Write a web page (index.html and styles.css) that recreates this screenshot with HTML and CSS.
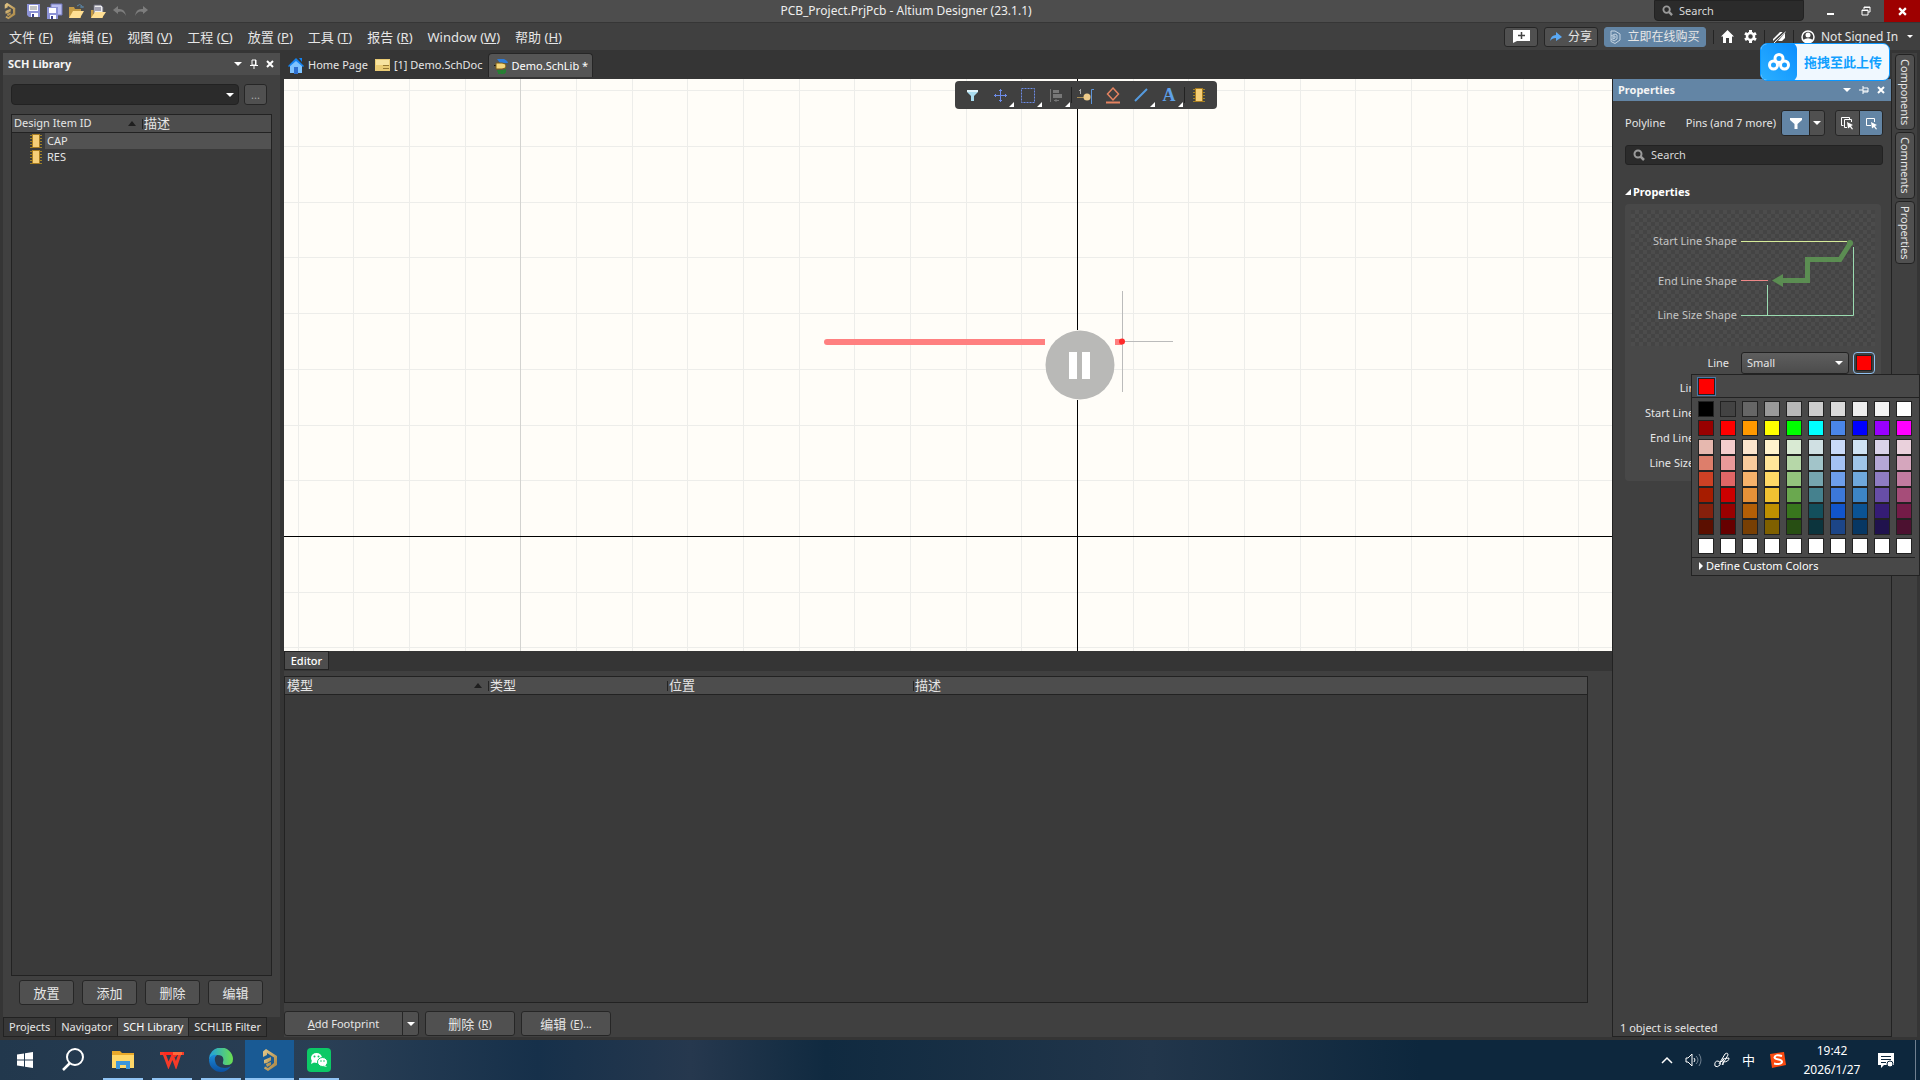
FILE: index.html
```html
<!DOCTYPE html>
<html lang="zh-CN">
<head>
<meta charset="utf-8">
<title>PCB_Project.PrjPcb - Altium Designer (23.1.1)</title>
<link rel="stylesheet" href="styles.css">
<script src="script.js" defer></script>
</head>
<body>
<svg class="defs" aria-hidden="true">
  <defs>
    <linearGradient id="gold" x1="0" y1="0" x2="1" y2="1"><stop offset="0" stop-color="#e6c98a"/><stop offset="1" stop-color="#a5813f"/></linearGradient>
    <linearGradient id="edgeA" x1="0" y1="0" x2="1" y2="0"><stop offset="0" stop-color="#1f9fe0"/><stop offset="1" stop-color="#6be04f"/></linearGradient>
    <linearGradient id="edgeB" x1="0" y1="0" x2="0" y2="1"><stop offset="0" stop-color="#1b8ad8"/><stop offset="1" stop-color="#0c4f9e"/></linearGradient>
    <symbol id="altium" viewBox="0 0 16 24"><path d="M1 9V3.500L4 1l11 7v9L6 23l-4-2.500 1-2 3 1.500 6-5V9.500L5 5v2z" fill="url(#gold)"/><path d="M2 12l7-3v3.500L5 15l-3 .5zM4 16l5-2v3l-4 2z" fill="url(#gold)"/></symbol>
    <symbol id="chip" viewBox="0 0 12 14"><path d="M0 1.500h12M0 4.500h12M0 7.500h12M0 10.500h12M0 13.500h12" stroke="#a08228"/><rect x="2" y="0" width="8" height="14" fill="#a87c20"/><rect x="3" y="1" width="6" height="12" fill="#f6cf78"/></symbol>
    <symbol id="lens" viewBox="0 0 12 12"><circle cx="5" cy="5" r="3.500" fill="none" stroke="#9a9a9a" stroke-width="2"/><path d="M7.500 7.500l3.500 3.500" stroke="#9a9a9a" stroke-width="2.500"/></symbol>
    <symbol id="down" viewBox="0 0 8 6"><path d="M0 1h8L4 5z" fill="#fff"/></symbol>
    <symbol id="cross" viewBox="0 0 8 8"><path d="M1 1l6 6M7 1L1 7" stroke="#fff" stroke-width="2"/></symbol>
  </defs>
</svg>

<header class="titlebar">
  <div class="quick">
    <svg class="logo" width="12" height="18"><use href="#altium"/></svg>
    <svg width="14" height="16" viewBox="1 0 14 16"><path d="M1 1h13v13H3l-2-2z" fill="#8d93d6"/><path d="M3 2h9v6H3z" fill="#fff"/><path d="M4 4h7M4 6h7" stroke="#888"/><path d="M5 10h7v4H5z" fill="#fff"/><path d="M6 11h2v3H6z" fill="#3c4290"/></svg>
    <svg width="17" height="17"><path d="M5 1h11v11H5z" fill="#b9bdf0" stroke="#7278bd"/><path d="M1 4h11v12H1z" fill="#8d93d6"/><path d="M3 5h7v5H3z" fill="#fff"/><path d="M4 12h6v4H4z" fill="#fff"/><path d="M5 13h2v3H5z" fill="#3c4290"/></svg>
    <svg width="17" height="17"><path d="M1 4h5l1 2h6v9H1z" fill="#c59b45"/><path d="M1 15l4-7h11l-4 7z" fill="#ffdf94"/><path d="M9 3q3-3 5 0v2M12 4h4" stroke="#5a86a8" fill="none"/></svg>
    <svg width="17" height="17"><path d="M1 7h12v8H1z" fill="#c59b45"/><path d="M4 2h7l2 2v7H4z" fill="#eee" stroke="#667"/><path d="M5 5h6M5 7h6" stroke="#557"/><path d="M1 15l4-6h11l-4 6z" fill="#ffdf94"/></svg>
    <svg width="16" height="12"><path d="M6 1L1 5l5 4V7q5-2 8 4Q13 3 6 4z" fill="#7d7d7d"/></svg>
    <svg width="16" height="12"><path d="M10 1l5 4-5 4V7Q5 5 2 11 3 3 10 4z" fill="#7d7d7d"/></svg>
  </div>
  <h1 class="title">PCB_Project.PrjPcb - Altium Designer (23.1.1)</h1>
  <label class="title-search"><svg width="11" height="11"><use href="#lens"/></svg><input type="text" placeholder="Search" aria-label="Search"></label>
  <div class="window-buttons">
    <button aria-label="Minimize"><svg width="10" height="10"><path d="M2 8h7" stroke="#fff" stroke-width="2"/></svg></button>
    <button aria-label="Restore"><svg width="10" height="10"><path d="M3 3V1h6v5H7M1 4h6v5H1z" fill="none" stroke="#fff"/><path d="M1 4.500h6M3 1.500h6" stroke="#fff"/></svg></button>
    <button class="close" aria-label="Close"><svg width="9" height="9" viewBox="0 0 8 8"><use href="#cross"/></svg></button>
  </div>
</header>

<nav class="menubar">
  <ul class="menus">
    <li><a href="#">文件 (<u>F</u>)</a></li><li><a href="#">编辑 (<u>E</u>)</a></li><li><a href="#">视图 (<u>V</u>)</a></li><li><a href="#">工程 (<u>C</u>)</a></li><li><a href="#">放置 (<u>P</u>)</a></li><li><a href="#">工具 (<u>T</u>)</a></li><li><a href="#">报告 (<u>R</u>)</a></li><li><a href="#">Window (<u>W</u>)</a></li><li><a href="#">帮助 (<u>H</u>)</a></li>
  </ul>
  <div class="account">
    <button class="btn note" aria-label="Comment"><svg width="17" height="13"><path d="M0 0h17v11H4l-4 2z" fill="#fff"/><path d="M5 5.500h7M8.500 2v7" stroke="#444" stroke-width="1.500"/></svg></button>
    <button class="btn share"><svg width="12" height="10"><path d="M0 9q1-6 6-6V0l6 5-6 4V6Q2 6 0 9z" fill="#5aa9f5"/></svg>分享</button>
    <button class="btn buy"><svg width="11" height="14" fill="none" stroke="#c5d4e2"><path d="M1 1h4l5 3v6l-5 3.500-4-2V9M1 1v5l4-2 2 1v4l-3 2-3-2V6"/><path d="M3 6v3l2-1V6z"/></svg>立即在线购买</button>
    <i class="sep"></i>
    <svg width="13" height="13"><path d="M6.500 0L13 6.500h-2V13H8V8H5v5H2V6.500H0z" fill="#fff"/></svg>
    <svg class="gear-ico" width="13" height="13"><circle cx="6.500" cy="6.500" r="3.500" fill="none" stroke="#fff" stroke-width="2.500"/><path d="M6.500 0v3M6.500 10v3M1 3.200l2.500 1.500M9.500 8.300L12 9.800M1 9.800l2.500-1.500M9.500 4.700L12 3.200" stroke="#fff" stroke-width="3"/></svg>
    <i class="sep"></i>
    <svg width="14" height="13"><path d="M1 9L8 2h3L3 11H1zM6 11l7-8v5l-3 3z" fill="#fff"/><path d="M1 12L13 1" stroke="#404040" stroke-width="1.500"/><path d="M2 13L13.500 2" stroke="#fff"/></svg>
    <i class="sep"></i>
    <svg width="14" height="14"><circle cx="7" cy="7" r="6" fill="none" stroke="#fff" stroke-width="1.500"/><circle cx="7" cy="5" r="2.500" fill="#fff"/><path d="M2 10q5-3.500 10 0-2 3.500-5 3.500T2 10z" fill="#fff"/></svg>
    <a class="signin" href="#">Not Signed In</a>
    <svg width="6" height="5" viewBox="0 0 8 6"><use href="#down"/></svg>
  </div>
</nav>

<div class="upload"><span class="upload-ico"><svg width="22" height="18" fill="none" stroke="#fff" stroke-width="3"><circle cx="11" cy="5.500" r="4"/><circle cx="5.500" cy="12" r="4"/><circle cx="16.500" cy="12" r="4"/></svg></span><span>拖拽至此上传</span></div>

<main class="work">
  <section class="library">
    <div class="lib-body">
      <div class="panel-head"><h2>SCH Library</h2><svg width="8" height="6"><use href="#down"/></svg><svg width="8" height="10"><path d="M2 1h4v5H2zM0 6.500h8M4 6v4" stroke="#fff" fill="none"/><path d="M5 1h1v5H5z" fill="#fff"/></svg><svg width="8" height="8"><use href="#cross"/></svg></div>
      <div class="lib-filter"><label class="combo"><input type="text" aria-label="Library"><svg width="8" height="6"><use href="#down"/></svg></label><button class="btn">...</button></div>
      <div class="lib-list">
        <table>
          <thead><tr><th class="c-id">Design Item ID<svg class="sort" width="8" height="5"><path d="M0 5h8L4 0z" fill="#1f1f1f"/></svg></th><th>描述</th></tr></thead>
          <tbody>
            <tr><td class="item"><svg width="12" height="14"><use href="#chip"/></svg><span>CAP</span></td><td class="picked"></td></tr>
            <tr><td class="item plain"><svg width="12" height="14"><use href="#chip"/></svg><span>RES</span></td><td></td></tr>
          </tbody>
        </table>
      </div>
      <div class="lib-actions"><button class="btn">放置</button><button class="btn">添加</button><button class="btn">删除</button><button class="btn">编辑</button></div>
    </div>
    <div class="lib-tabs"><button>Projects</button><button>Navigator</button><button class="on">SCH Library</button><button>SCHLIB Filter</button></div>
  </section>

  <div class="docs">
    <div class="doc-tabs">
      <a href="#"><svg width="16" height="17"><path d="M2 8l6-6 6 6v8H2z" fill="#7ec3ff"/><path d="M0 9l8-8 8 8-1 1-7-6-7 6z" fill="#1583f0"/><path d="M11 1h3v4z" fill="#1583f0"/><path d="M6 10h4v7H6z" fill="#2e6fd0"/></svg>Home Page</a>
      <a href="#"><svg width="15" height="12"><path d="M0 0h15v12H0z" fill="#e9cb74"/><path d="M1 1h13v5H1z" fill="#f7e3a0"/><path d="M8 6.500h6M8 9.500h6" stroke="#967832"/></svg>[1] Demo.SchDoc</a>
      <a href="#" class="on"><svg width="16" height="16"><path d="M4 1h7q4 2 4 4H7z" fill="#2e7bd8"/><path d="M1 7.500h12" stroke="#111"/><path d="M3 5h6q4 0 4 3t-4 3H3z" fill="#f5d67b" stroke="#7b5d18"/><path d="M4 13h9M5 15h7M6 12v4M9 12v4M12 11v4" stroke="#238431" stroke-width="1.500"/></svg>Demo.SchLib *</a>
    </div>
    <div class="doc-row">
      <div class="center">
        <div class="canvas">
          <svg width="100%" height="100%">
            <g class="grid">
              <path d="M14.500 0v572M69.500 0v572M125.500 0v572M181.500 0v572M292.500 0v572M348.500 0v572M403.500 0v572M459.500 0v572M515.500 0v572M570.500 0v572M626.500 0v572M682.500 0v572M737.500 0v572M849.500 0v572M904.500 0v572M960.500 0v572M1016.500 0v572M1071.500 0v572M1127.500 0v572M1183.500 0v572M1239.500 0v572M1294.500 0v572"/>
              <path d="M0 11.500h1328M0 67.500h1328M0 123.500h1328M0 178.500h1328M0 234.500h1328M0 290.500h1328M0 346.500h1328M0 401.500h1328M0 513.500h1328M0 568.500h1328"/>
              <path class="major" d="M236.500 0v572"/>
            </g>
            <path class="axis" d="M793.500 0v251M793.500 321v251M0 457.500h1328"/>
            <path d="M543 263h218M831 263h7" stroke="#ff8080" stroke-width="6"/><circle cx="543" cy="263" r="3" fill="#ff8080"/>
            <path d="M838.500 212v101M838 262.500h51" stroke="#bbb"/>
            <circle cx="838" cy="262.500" r="3" fill="#ff2a2a"/>
            <circle cx="796" cy="286" r="34.500" fill="#b9b9b7"/>
            <path d="M785 273h8v27h-8zM798 273h8v27h-8z" fill="#fff"/>
          </svg>
          <div class="active-bar">
            <button aria-label="Filter"><svg width="16" height="18"><path d="M3 4h11v2l-4 4v5H7v-5L3 6z" fill="#a9dcef"/><path d="M3 4h11v2H3z" fill="#e0f4fb"/></svg></button>
            <button class="more" aria-label="Move"><svg width="16" height="18"><path d="M8.500 3v13M2 9.500h13M7 4.500h3M7 14.500h3M3.500 8v3M13.500 8v3" stroke="#6d8ce8"/></svg></button>
            <button class="more" aria-label="Select"><svg width="16" height="18"><path d="M1.500 2.500h13v14h-13z" fill="none" stroke="#6d8ce8" stroke-dasharray="2 1"/></svg></button>
            <button class="more" aria-label="Align"><svg width="16" height="18"><path d="M2.500 3v13" stroke="#777"/><path d="M5 4h6v3H5zM5 8h9v4H5z" fill="#777"/><path d="M6 14.500h5M8 13v3" stroke="#777"/></svg></button>
            <button class="split" aria-label="Pin"><svg width="18" height="18"><path d="M0 10.500h9" stroke="#a88c52"/><circle cx="10" cy="10" r="3.500" fill="#edca8a"/><path d="M17 2.500h-2.500V17" stroke="#5e94d8" fill="none"/><path d="M3.500 2v5M2 3.500h2" stroke="#aaa"/></svg></button>
            <button aria-label="Port"><svg width="16" height="18"><path d="M8 2l5.500 6L8 14 2.500 8z" fill="none" stroke="#e58360" stroke-width="1.500"/><path d="M1 16.500h14" stroke="#e58360" stroke-width="2"/></svg></button>
            <button class="more" aria-label="Line"><svg width="16" height="18"><path d="M2 15L14 3" stroke="#559be0" stroke-width="2"/></svg></button>
            <button class="more letter" aria-label="Text">A</button>
            <button class="split" aria-label="Part"><svg width="12" height="14"><use href="#chip"/></svg></button>
          </div>
        </div>
        <section class="editor">
          <div class="editor-tabs"><button>Editor</button></div>
          <div class="editor-body">
            <div class="models"><table><thead><tr><th class="m1">模型<svg class="sort" width="8" height="5"><path d="M0 5h8L4 0z" fill="#1f1f1f"/></svg></th><th class="m2">类型</th><th class="m3">位置</th><th>描述</th></tr></thead></table></div>
            <div class="model-actions">
              <div class="split-btn"><button class="btn"><u>A</u>dd Footprint</button><button class="btn arrow" aria-label="More"><svg width="8" height="6"><use href="#down"/></svg></button></div>
              <button class="btn wide">删除 <small>(<u>R</u>)</small></button><button class="btn wide">编辑 <small>(<u>E</u>)...</small></button>
            </div>
          </div>
        </section>
      </div>

      <aside class="props">
        <div class="props-head"><h2>Properties</h2><svg width="8" height="6"><use href="#down"/></svg><svg width="10" height="8"><path d="M0 4h4M4 0v8M4 2h5v4H4" stroke="#fff" fill="none"/><path d="M4 5h5" stroke="#fff"/></svg><svg width="8" height="8"><use href="#cross"/></svg></div>
        <div class="props-body">
          <div class="kind"><span>Polyline</span><span class="pins">Pins (and 7 more)</span>
            <div class="pair p1"><button class="btn on" aria-label="Filter"><svg width="12" height="12"><path d="M0 1h12v2L7.500 7v5h-3V7L0 3z" fill="#fff"/></svg></button><button class="btn arrow" aria-label="Filter options"><svg width="8" height="6"><use href="#down"/></svg></button></div>
            <div class="pair p2"><button class="btn" aria-label="Select multiple"><svg width="13" height="13" fill="none" stroke="#fff"><path d="M2.500 8.500h-2v-8h8v2M6 10.500H3.500v-8h7V5"/><path d="M6 5l6 3-2 1 2 3-1 .5L9 10l-2 1.500z" fill="#fff" stroke="none"/></svg></button><button class="btn on" aria-label="Select one"><svg width="13" height="13" fill="none" stroke="#fff"><path d="M6 8.500H1.500v-7h8V5"/><path d="M6 5l6 3-2 1 2 3-1 .5L9 10l-2 1.500z" fill="#fff" stroke="none"/></svg></button></div>
          </div>
          <label class="prop-search"><svg width="12" height="12"><use href="#lens"/></svg><input type="text" placeholder="Search" aria-label="Search properties"></label>
          <h3><svg width="6" height="6"><path d="M6 0v6H0z" fill="#fff"/></svg>Properties</h3>
          <div class="group">
            <div class="diagram">
              <ul><li>Start Line Shape</li><li>End Line Shape</li><li>Line Size Shape</li></ul>
              <svg width="134" height="136" fill="none"><path d="M0 31.500h106" stroke="#d6ec9a"/><path d="M0 70.500h27" stroke="#e88"/><path d="M26.500 75v30M0 105.500h112.500V37" stroke="#9adbb0"/><path d="M110 32L99 49.500H66.500v21H40" stroke="#5b8d52" stroke-width="5"/><circle cx="109" cy="33" r="3" fill="#5b8d52"/><path d="M31 70.500L42 64v13z" fill="#5b8d52"/></svg>
            </div>
            <div class="row"><label for="line">Line</label><select id="line" class="size"><option>Small</option></select><svg class="size-arrow" width="8" height="6"><use href="#down"/></svg>
              <div class="picker"><button class="swatch-btn" aria-label="Line colour"><i></i></button>
                <div class="palette">
                  <div class="palette-top"><button class="chosen" aria-label="Current colour"></button></div>
                  <div id="swatches"></div>
                  <button class="custom"><svg width="5" height="8"><path d="M1 0l4 4-4 4z" fill="#fff"/></svg>Define Custom Colors</button>
                </div>
              </div>
            </div>
            <div class="row"><span>Line Style</span></div><div class="row"><span>Start Line Shape</span></div><div class="row"><span>End Line Shape</span></div><div class="row"><span>Line Size Shape</span></div>
          </div>
          <p class="status">1 object is selected</p>
        </div>
      </aside>
    </div>
  </div>
  <nav class="dock"><button>Components</button><button>Comments</button><button>Properties</button></nav>
</main>

<footer class="taskbar">
  <button aria-label="Start"><svg width="16" height="16"><path d="M0 2.500l7-1v6H0zM8 1.300L16 0v7.500H8zM0 8.500h7v6l-7-1zM8 8.500h8V16l-8-1.300z" fill="#fff"/></svg></button>
  <button aria-label="Search"><svg width="24" height="24"><circle cx="13" cy="9" r="8" fill="none" stroke="#fff" stroke-width="2"/><path d="M8 15l-7 7" stroke="#fff" stroke-width="2.500"/></svg></button>
  <button class="run" aria-label="Explorer"><svg width="22" height="20"><path d="M0 1h8l2 2h12v15H0z" fill="#e9a92a"/><path d="M0 5h22v13H0z" fill="#ffd768"/><path d="M4 11h14v8h-4v-4H8v4H4z" fill="#3b96dc"/></svg></button>
  <button class="run" aria-label="WPS"><svg width="24" height="18" fill="none" stroke="#f53a28" stroke-width="3"><path d="M0 2.500h4l4.500 12 4-9.500 3.500 9.500 4-12h4"/><path d="M4 2.500h9l3 3" stroke="#ff2a20"/><path d="M13 2.500h9" stroke="#ff6a3a"/></svg></button>
  <button class="run" aria-label="Edge"><svg width="24" height="24"><path d="M0 12a12 12 0 0 1 24-1q0 6-6 6-5 0-4-3 2-7-6-7-6 0-8 5z" fill="url(#edgeA)"/><path d="M0 12q2-6 8-5-3 2-2 6 1 7 10 7 3 0 6-2-4 6-10 6A12 12 0 0 1 0 12z" fill="url(#edgeB)"/></svg></button>
  <button class="run active" aria-label="Altium Designer"><svg width="16" height="24"><use href="#altium"/></svg></button>
  <button class="run" aria-label="WeChat"><svg width="24" height="24"><rect width="24" height="24" rx="4" fill="#0cc966"/><ellipse cx="9.500" cy="10" rx="5.500" ry="5" fill="#fff"/><path d="M5 12l-1 4 4-2z" fill="#fff"/><ellipse cx="15.500" cy="14" rx="5" ry="4.500" fill="#fff" stroke="#0cc966"/><path d="M18 17l2 2-4-1z" fill="#fff"/><g fill="#0cc966"><circle cx="7.500" cy="8.500" r="1"/><circle cx="11.500" cy="8.500" r="1"/><circle cx="14" cy="13" r=".8"/><circle cx="17" cy="13" r=".8"/></g></svg></button>
  <div class="tray">
    <svg width="12" height="8"><path d="M1 7l5-5 5 5" fill="none" stroke="#fff" stroke-width="1.500"/></svg>
    <svg width="17" height="14" fill="none" stroke="#fff"><path d="M1 5h2l4-4v12L3 9H1z"/><path d="M9 5q2 2 0 4"/><path d="M11 3q4 4 0 8M14 1q4 6 0 12" stroke="#6f8090"/></svg>
    <svg width="16" height="16" fill="none" stroke="#fff"><path d="M1 14q-1-5 3-5 4 1 2 4-3 3-5 1zM5 12l6-10q3-2 3 1L8 13M7 10q3-5 8-4 0 4-6 4M9 6v7"/></svg>
    <span class="ime">中</span>
    <svg width="16" height="16"><path d="M0 2l14-2 2 13-14 3z" fill="#fb4a0f"/><path d="M12 4Q5 2 4.500 5.500 5 7 8.500 7.500T12 10q-1 3-8 1.500" stroke="#fff" stroke-width="2" fill="none"/></svg>
    <time>19:42<br>2026/1/27</time>
    <svg width="17" height="17"><path d="M0 1h16v12H6l-3 3v-3H0z" fill="#fff"/><path d="M3 4.500h10M3 7.500h10M3 10.500h5" stroke="#0d273d"/><circle cx="12" cy="12" r="3" fill="#fff" stroke="#0d273d"/></svg>
    <i class="desk"></i>
  </div>
</footer>
</body>
</html>
```
FILE: styles.css
```css
* { box-sizing: border-box; }
body { margin: 0; height: 100vh; display: flex; flex-direction: column; overflow: hidden; background: #353535; color: #e6e6e6; font: 11px/16px "Noto Sans", "Noto Sans CJK SC", sans-serif; }
h1, h2, h3, p, ul { margin: 0; padding: 0; font-size: inherit; font-weight: 400; list-style: none; }
a { color: inherit; text-decoration: none; }
button, input, select { font: inherit; color: inherit; margin: 0; padding: 0; border: 0; background: none; }
input { width: 100%; min-width: 0; outline: 0; }
input::placeholder { color: #d8d8d8; opacity: 1; }
svg { flex: none; display: block; }
.defs { position: absolute; width: 0; height: 0; }
.btn { display: flex; align-items: center; justify-content: center; background: #505050; border: 1px solid #262626; border-radius: 3px; white-space: nowrap; }
.btn.on { background: #6385a5; }

.titlebar { flex: none; height: 23px; display: grid; grid-template-columns: 1fr 150px 116px; align-items: start; background: #4d4d4d; border-bottom: 1px solid #363636; }
.quick { grid-column: 1; grid-row: 1; display: flex; align-items: center; gap: 5px; height: 22px; padding-left: 4px; }
.quick .logo { margin-right: 6px; }
.title { grid-column: 1 / -1; grid-row: 1; padding-right: 108px; text-align: center; font-size: 12px; line-height: 22px; color: #eee; }
.title-search { grid-column: 2; grid-row: 1; height: 21px; display: flex; align-items: center; gap: 6px; padding-left: 7px; background: #2b2b2b; border: 1px solid #222; border-radius: 0 0 4px 4px; }
.window-buttons { grid-column: 3; grid-row: 1; display: flex; justify-content: flex-end; height: 22px; }
.window-buttons button { width: 36px; display: grid; place-items: center; }
.window-buttons .close { background: #9e0000; }

.menubar { flex: none; height: 27px; display: flex; align-items: center; justify-content: space-between; background: #404040; padding: 0 7px 0 9px; }
.menus { display: flex; gap: 15px; font-size: 13px; white-space: nowrap; }
.account { display: flex; align-items: center; gap: 6px; font-size: 12px; }
.account .btn { height: 20px; gap: 6px; }
.note { width: 34px; }
.share { width: 54px; }
.account .buy { width: 102px; background: #6385a5; border-color: #6385a5; }
.sep { width: 1px; height: 14px; margin: 0 1px; background: #242424; }
.gear-ico { margin-left: 4px; }
.signin { width: 80px; white-space: nowrap; }

.upload { position: absolute; z-index: 5; top: 43px; right: 30px; width: 130px; height: 38px; display: flex; align-items: center; gap: 7px; border: 1px solid #0a97ff; border-radius: 7px; background: #f0f8ff; color: #10a0ff; font: 700 13px/18px "Noto Sans CJK SC", sans-serif; overflow: hidden; white-space: nowrap; }
.upload-ico { width: 36px; height: 38px; display: grid; place-items: center; border-radius: 6px; background: linear-gradient(45deg, #2bb0ff, #0a8dff); }

.work { flex: 1; min-height: 0; display: flex; }
.library { flex: none; width: 280px; padding: 3px 0 3px 3px; display: flex; flex-direction: column; }
.lib-body { flex: 1; min-height: 0; display: flex; flex-direction: column; background: #404040; }
.panel-head, .props-head { flex: none; height: 22px; display: flex; align-items: center; gap: 8px; padding: 0 6px 0 5px; background: #4d4d4d; }
.panel-head h2, .props-head h2 { flex: 1; font-weight: 700; color: #f4f4f4; }
.lib-filter { display: flex; gap: 5px; padding: 9px 13px 9px 8px; }
.combo { flex: 1; height: 21px; display: flex; align-items: center; padding: 0 4px; background: #2b2b2b; border: 1px solid #222; border-radius: 4px; }
.lib-filter .btn { width: 23px; color: #aaa; }
.lib-list { flex: 1; margin: 0 8px; border: 1px solid #222; background: #3a3a3a; }
table { width: 100%; border-collapse: collapse; table-layout: fixed; }
th { height: 17px; padding: 0 0 0 2px; text-align: left; font-weight: 400; line-height: 16px; background: #4d4d4d; border-bottom: 1px solid #222; white-space: nowrap; }
th + th { font-size: 13px; padding-left: 2px; background: linear-gradient(#242424, #242424) 0 4px / 1px 10px no-repeat #4d4d4d; }
.c-id { width: 130px; }
.sort { float: right; margin: 6px 6px 0 0; }
td { height: 16px; padding: 0; line-height: 16px; }
.item { display: flex; align-items: center; gap: 3px; padding-left: 18px; }
.item span { flex: 1; padding-left: 2px; background: #525252; }
.item.plain span { background: none; }
.picked { background: #525252; }
.lib-actions { display: flex; gap: 8px; padding: 4px 16px 12px; }
.lib-actions .btn { width: 55px; height: 25px; font-size: 13px; }
.lib-tabs { display: flex; }
.lib-tabs button { height: 20px; padding: 0 5px; border: 1px solid #222; background: #373737; white-space: nowrap; margin-right: -1px; }
.lib-tabs .on { background: #4d4d4d; color: #fff; }

.docs { flex: 1; min-width: 0; display: flex; flex-direction: column; }
.doc-tabs { flex: none; height: 29px; padding: 3px 0 2px 8px; display: flex; gap: 7px; }
.doc-tabs a { height: 24px; display: flex; align-items: center; gap: 4px; white-space: nowrap; }
.doc-tabs .on { margin-left: -2px; padding: 0 4px; gap: 3px; background: #555; border: 1px solid #262626; border-bottom: 0; border-radius: 4px 4px 0 0; color: #fff; }
.doc-row { flex: 1; min-height: 0; display: flex; }
.center { flex: 1; min-width: 0; display: flex; flex-direction: column; background: #404040; margin-left: 4px; }
.canvas { flex: 572 1 0; min-height: 0; position: relative; background: #fffdf8; overflow: hidden; }
.grid path { stroke: #ededea; }
.grid .major { stroke: #d3d3d0; }
.axis { stroke: #000; }
.active-bar { position: absolute; top: 2px; left: 671px; height: 28px; display: flex; padding: 0 5px 0 3px; background: #404040; border-radius: 4px; }
.active-bar button { position: relative; width: 28px; display: grid; place-items: center; }
.active-bar .more::after { content: ""; position: absolute; right: 0; bottom: 2px; border-left: 5px solid transparent; border-bottom: 5px solid #fff; }
.active-bar .split { border-left: 1px solid #222; height: 16px; margin: 6px 0 0 1px; }
.active-bar .letter { font: 700 18px/20px "Liberation Serif", serif; color: #5ea0e8; }

.editor { flex: 389 1 0; min-height: 0; display: flex; flex-direction: column; }
.editor-tabs { flex: none; height: 20px; background: #353535; }
.editor-tabs button { height: 19px; width: 45px; background: #4d4d4d; border: 1px solid #222; color: #fff; font-weight: 500; }
.editor-body { flex: 1; display: flex; flex-direction: column; padding: 5px 0 1px; border-bottom: 3px solid #353535; }
.models { flex: 1; margin-right: 24px; border: 1px solid #222; background: #3a3a3a; }
.models th { font-size: 13px; }
.m1 { width: 203px; } .m2 { width: 179px; } .m3 { width: 246px; }
.model-actions { display: flex; gap: 6px; padding-top: 8px; }
.model-actions .btn { height: 25px; }
.split-btn, .pair { display: flex; }
.split-btn .btn:first-child { width: 119px; }
.split-btn .arrow { width: 17px; }
.split-btn > :first-child, .pair > :first-child { border-radius: 3px 0 0 3px; }
.split-btn > :last-child, .pair > :last-child { border-radius: 0 3px 3px 0; margin-left: -1px; }
.model-actions .wide { width: 90px; font-size: 13px; gap: 4px; }
small { font-size: 11px; }

.props { flex: none; width: 280px; display: flex; flex-direction: column; background: #404040; border: 1px solid #222; border-top: 0; margin-bottom: 3px; }
.props-head { background: #6385a5; }
.props-body { flex: 1; display: flex; flex-direction: column; padding: 9px 8px 0 12px; }
.kind { display: flex; align-items: center; }
.pins { margin-left: auto; }
.pair .btn { height: 26px; }
.p1 { margin-left: 5px; } .p2 { margin-left: 10px; }
.p1 .on { width: 29px; } .p1 .arrow { width: 16px; }
.p2 .btn:first-child { width: 25px; }
.p2 .btn { width: 24px; }
.prop-search { display: flex; align-items: center; gap: 6px; height: 20px; margin-top: 9px; padding-left: 7px; background: #2b2b2b; border: 1px solid #222; border-radius: 3px; }
.props h3 { display: flex; align-items: center; gap: 2px; margin: 19px 0 4px; font-weight: 700; color: #fff; }
.group { margin-right: 2px; padding: 6px; background: #484848; border-radius: 4px; }
.diagram { height: 136px; display: flex; justify-content: space-between; background: repeating-conic-gradient(#4c4c4c 0 25%, #444 0 50%) 0 0 / 8px 8px; color: #c4c4c4; }
.diagram ul { flex: 1; text-align: right; padding: 23px 4px 0 0; display: grid; grid-template-rows: 40px 34px 16px; }
.row { display: flex; align-items: center; height: 25px; }
.row:nth-child(2) { margin-top: 5px; height: 24px; }
.row > label, .row > span { width: 98px; text-align: right; white-space: nowrap; }
.size { width: 108px; height: 22px; margin-left: 12px; padding-left: 5px; appearance: none; background: linear-gradient(#5e5e5e, #4c4c4c); border: 1px solid #222; border-radius: 3px; }
.size-arrow { margin: 0 6px 0 -14px; pointer-events: none; }
.picker { position: relative; margin-left: 4px; }
.swatch-btn { display: grid; place-items: center; width: 22px; height: 22px; border: 1px solid #8fc0f0; border-radius: 4px; background: #404040; }
.swatch-btn i { width: 16px; height: 16px; background: #f00; border: 1px solid #222; }
.palette { position: absolute; z-index: 4; top: 22px; right: -45px; width: 229px; background: #484848; border: 1px solid #222; padding-bottom: 1px; }
.palette-top { height: 23px; padding: 3px 6px; border-bottom: 1px solid #222; }
.chosen { display: block; width: 17px; height: 17px; background: #f00; border: 1px solid #222; box-shadow: 0 0 0 1px #4c78a8; }
#swatches { display: grid; grid-template-columns: repeat(10, 16px); column-gap: 6px; margin-right: 4px; padding: 3px 0 3px 6px; border-bottom: 1px solid #222; }
#swatches button { height: 16px; border: 1px solid #222; }
#swatches .gap { margin-bottom: 3px; }
.custom { display: flex; align-items: center; gap: 3px; height: 16px; padding-left: 6px; color: #fff; }
.status { margin-top: auto; margin-left: -5px; }

.dock { flex: none; width: 28px; display: flex; flex-direction: column; align-items: flex-start; gap: 2px; margin: 3px 0; padding: 1px 0 0 3px; background: #404040; border-right: 3px solid #353535; }
.dock button { writing-mode: vertical-rl; width: 20px; background: #505050; border: 1px solid #222; border-radius: 4px; padding: 4px 0; text-align: left; }

.taskbar { flex: none; height: 40px; display: flex; background: linear-gradient(90deg, #22384d 0, #2a3f55 17%, #16304a 28%, #26384e 36%, #102a40 43%, #22364b 60%, #0d273d 74%, #0d273d 100%); }
.taskbar button { width: 49px; height: 40px; display: grid; place-items: center; }
.run { background: linear-gradient(#90c4f4, #90c4f4) 50% 100% / 40px 2px no-repeat; }
.taskbar .active { background: linear-gradient(#90c4f4, #90c4f4) 0 100% / 49px 2px no-repeat #195a94; }
.tray { margin-left: auto; display: flex; align-items: center; gap: 12px; color: #fff; font-size: 12px; line-height: 19px; padding-right: 4px; }
.ime { width: 16px; font-size: 13px; }
.tray time { text-align: center; width: 60px; margin: 0 4px; }
.desk { width: 1px; height: 40px; margin-left: 8px; background: #708090; }
```
FILE: script.js
```js
const rows = [
  ['gap', '#000000 #434343 #666666 #999999 #b7b7b7 #cccccc #d9d9d9 #efefef #f3f3f3 #ffffff'],
  ['gap', '#980000 #ff0000 #ff9900 #ffff00 #00ff00 #00ffff #4a86e8 #0000ff #9900ff #ff00ff'],
  ['', '#e6b8af #f4cccc #fce5cd #fff2cc #d9ead3 #d0e0e3 #c9daf8 #cfe2f3 #d9d2e9 #ead1dc'],
  ['', '#dd7e6b #ea9999 #f9cb9c #ffe599 #b6d7a8 #a2c4c9 #a4c2f4 #9fc5e8 #b4a7d6 #d5a6bd'],
  ['', '#cc4125 #e06666 #f6b26b #ffd966 #93c47d #76a5af #6d9eeb #6fa8dc #8e7cc3 #c27ba0'],
  ['', '#a61c00 #cc0000 #e69138 #f1c232 #6aa84f #45818e #3c78d8 #3d85c6 #674ea7 #a64d79'],
  ['', '#85200c #990000 #b45f06 #bf9000 #38761d #134f5c #1155cc #0b5394 #351c75 #741b47'],
  ['gap', '#5b0f00 #660000 #783f04 #7f6000 #274e13 #0c343d #1c4587 #073763 #20124d #4c1130'],
  ['', '#fff #fff #fff #fff #fff #fff #fff #fff #fff #fff'],
];
const box = document.getElementById('swatches');
for (const [cls, colours] of rows) {
  for (const colour of colours.split(' ')) {
    const b = document.createElement('button');
    b.className = cls;
    b.style.background = colour;
    b.setAttribute('aria-label', colour);
    box.append(b);
  }
}
```
